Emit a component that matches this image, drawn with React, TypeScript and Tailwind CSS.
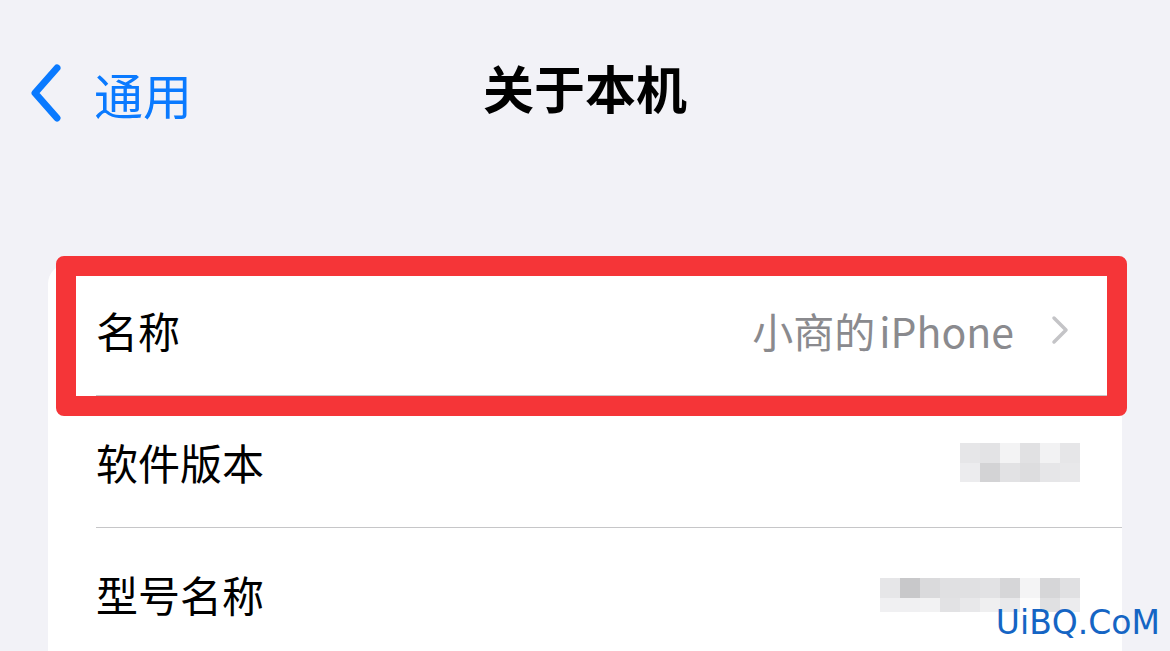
import React from 'react';

const cjk = { fontFamily: '"Noto Sans CJK SC", "Noto Sans", sans-serif' };

const blur2 = [
  ['#e6e6e8', '#e3e3e5', '#f3f3f4', '#e1e1e3', '#f2f2f3', '#e6e6e8'],
  ['#ececee', '#d3d3d5', '#e2e2e4', '#dddddf', '#e6e6e8', '#e8e8ea'],
];

const blur3 = [
  ['#e6e6e8', '#c8c8ca', '#dadadc', '#e0e0e2', '#e0e0e2', '#e2e2e4', '#d6d6d8', '#f4f4f5', '#d6d6d8', '#e0e0e2'],
  ['#f0f0f2', '#f0f0f2', '#f2f2f3', '#e2e2e4', '#e8e8ea', '#efeff0', '#e9e9eb', '#fcfcfc', '#e0e0e2', '#ececee'],
];

// Pixelated (mosaic) value placeholder
const Mosaic: React.FC<{ cells: string[][]; heights: number[] }> = ({ cells, heights }) => (
  <div className="flex flex-col">
    {cells.map((row, i) => (
      <div key={i} className="flex">
        {row.map((c, j) => (
          <div key={j} className="w-[20px]" style={{ backgroundColor: c, height: heights[i] }} />
        ))}
      </div>
    ))}
  </div>
);

const Row: React.FC<{ label: string; children?: React.ReactNode; divider?: boolean }> = ({
  label,
  children,
  divider = true,
}) => (
  <div className="relative flex h-[132px] items-center justify-between pl-[48px] pr-[42px]">
    <span className="text-[42px] leading-none text-black">{label}</span>
    {children}
    {divider && <div className="absolute bottom-0 left-[48px] right-0 h-px bg-[#c6c6c8]" />}
  </div>
);

export default function App() {
  return (
    <div className="relative h-[651px] w-[1170px] overflow-hidden bg-[#f2f2f7]" style={cjk}>
      {/* Nav bar */}
      <div className="relative flex h-[190px] items-start">
        <div className="flex items-center pl-[30px] pt-[64px]">
          <svg width="32" height="58" viewBox="0 0 32 58" fill="none">
            <path
              d="M27 4 L5 29 L27 54"
              stroke="#0a7aff"
              strokeWidth="7"
              strokeLinecap="round"
              strokeLinejoin="round"
            />
          </svg>
          <span className="ml-[32px] text-[49px] leading-none text-[#0a7aff]">通用</span>
        </div>
        <div className="absolute left-0 right-0 top-[62px] text-center text-[51px] font-bold leading-none text-black">
          关于本机
        </div>
      </div>

      {/* Card (continues past the bottom edge) */}
      <div className="mx-[48px] mt-[74px] h-[500px] rounded-[20px] bg-white">
        <Row label="名称">
          <div className="flex items-center pr-[10px]">
            <span className="text-[41px] leading-none text-[#8a8a8e]">
              小商的<span className="ml-[4px]">iPhone</span>
            </span>
            <svg className="ml-[36px]" width="20" height="30" viewBox="0 0 20 30" fill="none">
              <path d="M4 3 L16 15 L4 27" stroke="#c4c4c7" strokeWidth="3.5" strokeLinecap="round" strokeLinejoin="round" />
            </svg>
          </div>
        </Row>
        <Row label="软件版本">
          <Mosaic cells={blur2} heights={[20, 19]} />
        </Row>
        <Row label="型号名称" divider={false}>
          <div className="pt-[2px]">
            <Mosaic cells={blur3} heights={[20, 14]} />
          </div>
        </Row>
      </div>

      {/* Red annotation box */}
      <div className="absolute left-[56px] top-[256px] h-[160px] w-[1071px] rounded-[8px] border-[20px] border-[#f53538]" />

      {/* Watermark */}
      <div
        className="absolute right-[10px] top-[606px] text-[33px] leading-none text-[#1565c4]"
        style={{ fontFamily: '"DejaVu Sans", sans-serif' }}
      >
        UiBQ.CoM
      </div>
    </div>
  );
}
